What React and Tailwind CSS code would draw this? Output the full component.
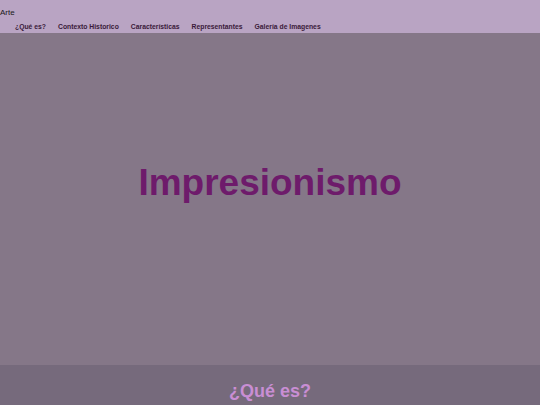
import React from 'react';

const links = ['¿Qué es?', 'Contexto Historico', 'Características', 'Representantes', 'Galería de Imagenes'];

function App() {
  return (
    <div className="min-h-screen bg-[#766a7c]" style={{ fontFamily: '"Liberation Sans", Arial, sans-serif' }}>
      {/* Header */}
      <header className="h-[33px] bg-[#b9a4c3]">
        <div className="pt-[8px] text-[8px] leading-[10px] text-[#1a1a1a]">Arte</div>
        <nav className="mt-[5px] flex gap-[12px] pl-[15px]">
          {links.map((l) => (
            <a key={l} className="text-[6.8px] font-bold leading-[8px] text-[#3a1a3a]">
              {l}
            </a>
          ))}
        </nav>
      </header>

      {/* Hero */}
      <section className="flex h-[332px] items-center justify-center bg-[#857788] pb-[32px]">
        <h1 className="text-[37px] font-bold text-[#6e1b6b]">Impresionismo</h1>
      </section>

      {/* Qué es */}
      <section className="bg-[#766a7c] pt-[13px]">
        <h2 className="text-center text-[18px] font-bold leading-[26px] text-[#c98ed4]">¿Qué es?</h2>
      </section>
    </div>
  );
}

export default App;
